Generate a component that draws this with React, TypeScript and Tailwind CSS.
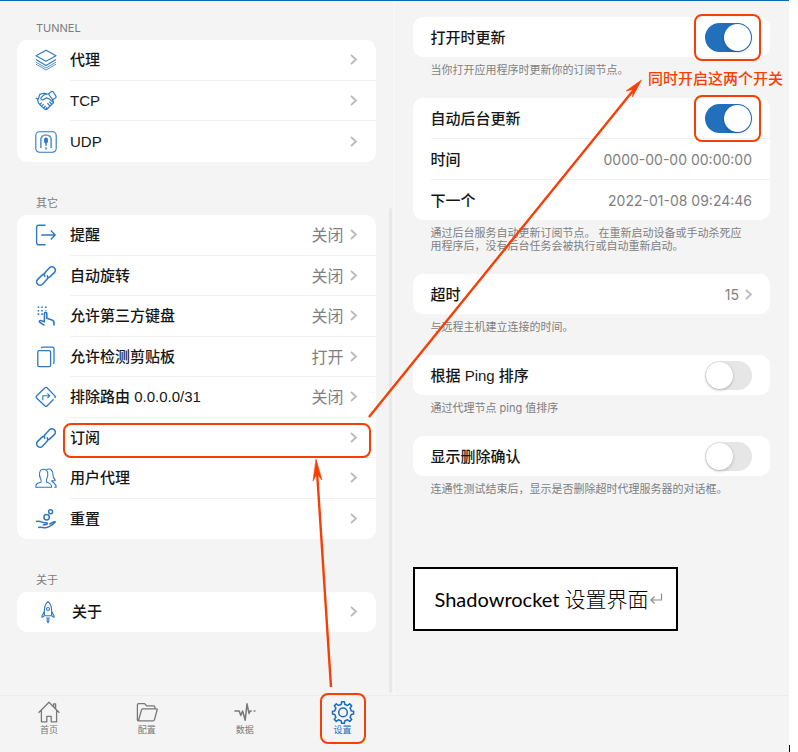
import type { ReactNode } from 'react';

const iconPaths: Record<string, ReactNode> = {
  layers: (
    <>
      <path d="M11 1.3 21 6.8 11 12.3 1 6.8Z" />
      <path d="m1 10.6 10 5.8 10-5.8" />
      <path d="m1 13.2 10 5.8 10-5.8M1 15.2l10 5.8 10-5.8" strokeWidth=".8" />
    </>
  ),
  handshake: (
    <g strokeWidth="1.2">
      <path d="m.8 8 2.400 1.400 1.600-5 4-1.200 3 .8" />
      <path d="m13.400 4 3.200-2.400c.6-.4 1.200-.3 1.600.2l2.800 4.600c.3.6.2 1-.3 1.400l-2.900 2Z" />
      <path d="M13.400 4 9.800 4.200 6 7.600c-.8 2.200 1.400 3 3.600 1.400l2-1.200c2 .4 4.600 2.400 6.200 4.200M17.800 9.800l.6 2.400c0 1.400-1 2.200-2.200 1.600" />
      <path d="M2.400 9.600 3.600 13l2 2.600 4.400 3.600c.8.500 1.500.4 2.200-.2l4.800-5M6.600 12.600l-2 2.200M8.600 14.200l-2 2.200M10.600 15.800l-1.800 2.200M12.400 13.200l2.400 2.600M14.200 11.600l2.400 2.600M12 17.400l-1.200 1.400" />
    </g>
  ),
  magnet: (
    <>
      <rect x=".8" y=".8" width="20.4" height="20.4" rx="3.6" />
      <path d="M5.800 17V9.400C5.800 6 8 4 11 4s5.200 2 5.200 5.400V17" strokeWidth="1.700" strokeOpacity=".75" />
      <rect x="9.700" y="7" width="2.600" height="4.800" rx="1" fill="currentColor" />
      <path d="M11 12v2.800M11 16.200v2.200" strokeWidth="1.400" />
    </>
  ),
  exit: (
    <path d="M10.600 1.200H3.800A2.200 2.200 0 0 0 1.600 3.400v15.200a2.200 2.200 0 0 0 2.200 2.200h6.800M6.200 11h14M15.800 6.600l4.400 4.400-4.400 4.400" strokeWidth="1.400" />
  ),
  link: (
    <g strokeWidth="1.500">
      <path d="M10.200 11.600c-1.400-1.400-1.300-3 0-4.200L14.700 2.600a3 3 0 0 1 4.300 0l.5.500a3 3 0 0 1 0 4.300l-4.600 4.500c-.9.900-2 1.100-3 .7" />
      <path d="M11.800 10.400c1.400 1.400 1.300 3 0 4.200l-4.500 4.800a3 3 0 0 1-4.300 0l-.5-.5a3 3 0 0 1 0-4.300l4.600-4.500c.9-.9 2-1.100 3-.7" />
    </g>
  ),
  touch: (
    <>
      <path d="M3.400 1.500v9M7 1.500v9M10.800 1.500v4" strokeWidth="1.600" strokeDasharray="1.600 1.800" />
      <path d="m9.400 20.400-4.800-3.200c-.8-1.600.8-2 2-1.400l2.800 1V8.600c0-1.600 2.400-1.600 2.400 0v4.600l5.200 1.800c1.600.600 2.200 1.800 2 3.200v2.400" strokeWidth="1.600" />
    </>
  ),
  copy: (
    <>
      <rect x="2.800" y="4.600" width="12.800" height="16" rx="1.400" strokeWidth="1.300" />
      <path d="M6.400 2.200c.2-.700.6-1 1.400-1h9.600c1 0 1.600.600 1.600 1.600v13.400c0 .8-.4 1.200-1 1.400" strokeWidth="1.300" />
    </>
  ),
  route: (
    <>
      <path d="M18.600 13.200 12 20a1.400 1.400 0 0 1-2 0L1.500 12a1.400 1.400 0 0 1 0-2L10 1.800a1.400 1.400 0 0 1 2 0l8.600 8.800-1 1.200" strokeWidth="1.300" />
      <path d="M7.800 14.200v-4.400h6.800M12.400 7.400l2.400 2.400-2.400 2.400" />
    </>
  ),
  users: (
    <>
      <path d="M.8 20.200c0-3.400 1.200-4.200 5.200-5 .6-1.400.2-2.600-.6-4-1.600-3.200-1.400-9 3.200-9s5 5.600 3.400 9c-.8 1.400-1 2.600-.4 4 3.800.8 5 1.800 5 5Z" />
      <path d="M11.400 2.600c5-2 6.800 2 6.600 5.400 0 3.200 1.400 4 2.400 5.200-1.200.600-2.600.8-3.800.6.400 1.600 4.600 2 4.600 6.400h-2" />
    </>
  ),
  care: (
    <g strokeWidth="1.500">
      <circle cx="11.600" cy="9.200" r="2.700" />
      <circle cx="15.600" cy="3.800" r="2" />
      <path d="M1 13.600c4-.8 5 .2 7.200 1 1.600.4 3.600-.4 4.200.6.600 1.200-2.600 1.800-4.600 1.600M3 19.400c4.200-.8 5.200.8 8.600.2 3-.6 6.400-3.200 8.800-5.800-1.400-.8-3.200.8-6.200 2.400" />
    </g>
  ),
  rocket: (
    <>
      <path d="M7.400 14.800V8.400C7.600 5 9.200 2.200 11 .8c1.800 1.400 3.400 4.200 3.600 7.600v6.400ZM7.400 10.200l-2.400 4.600v1.600l2.400-1.600M14.600 10.200l2.400 4.600v1.600l-2.400-1.600M9 17h4" />
      <circle cx="11" cy="8" r="1.500" />
      <path d="M11 17.600c-1.600 1.200-1 3 0 4 1-1 1.600-2.800 0-4Z" />
    </>
  ),
  home: (
    <path d="M.6 11.800 11 1.200l10.400 10.600M3.400 9.400v11.400h5.400v-5.400h4.400v5.400h5.400V9.400M15.600 5.600V2.800h2v5" strokeWidth="1.300" />
  ),
  folder: (
    <path d="M1.400 18.400V4.200c0-1 .5-1.600 1.400-1.600h5.800l2 2.200h6.800c1 0 1.600.600 1.600 1.600v1.400M2.400 19.800 5.600 8.600c.2-.6.600-.8 1.200-.8h13.600c.8 0 1 .4.800 1l-2.800 10c-.2.700-.6 1-1.200 1H2.600c-.8 0-1.200-.4-1.200-1.400" strokeWidth="1.300" />
  ),
  pulse: (
    <path d="M.4 10h4.800l1.600 4.400 1.800-4.400 2.600 9.200L13 2.800l2 9.600 1.200-2.400h1.600M19.600 10h1.800" strokeWidth="1.500" />
  ),
  gear: (
    <g strokeWidth="1.500">
      <path d="M9.300 3.300 9.600.8h2.800l.3 2.500 2.900 1.200 2.100-1.600 2 2-1.600 2.100 1.200 2.900 2.300.3v2.900l-2.300.3-1.200 2.900 1.600 2.100-2 2-2.100-1.600-2.900 1.200-.3 2.300H9.600l-.3-2.300-2.900-1.200-2.100 1.600-2-2 1.600-2.100-1.200-2.900L.5 13.100v-2.900l2.200-.3 1.200-2.900-1.600-2.100 2-2 2.100 1.600Z" />
      <circle cx="11" cy="11.400" r="4.300" />
    </g>
  ),
};

function Icon({ name, className = '' }: { name: string; className?: string }) {
  return (
    <svg
      viewBox="0 0 22 22"
      className={`size-[22px] shrink-0 overflow-visible ${className}`}
      fill="none"
      stroke="currentColor"
      strokeWidth="1.1"
      strokeLinejoin="round"
      aria-hidden="true"
    >
      {iconPaths[name]}
    </svg>
  );
}

function Chevron() {
  return (
    <svg viewBox="0 0 7 11" className="h-[11px] w-[7px] shrink-0" fill="none" stroke="#b9b9b9" strokeWidth="1.7" aria-hidden="true">
      <path d="m1 1 5 4.500-5 4.500" />
    </svg>
  );
}

type Item = { icon: string; label: string; value?: string; marked?: boolean };

const tunnel: Item[] = [
  { icon: 'layers', label: '代理' },
  { icon: 'handshake', label: 'TCP' },
  { icon: 'magnet', label: 'UDP' },
];

const others: Item[] = [
  { icon: 'exit', label: '提醒', value: '关闭' },
  { icon: 'link', label: '自动旋转', value: '关闭' },
  { icon: 'touch', label: '允许第三方键盘', value: '关闭' },
  { icon: 'copy', label: '允许检测剪贴板', value: '打开' },
  { icon: 'route', label: '排除路由 0.0.0.0/31', value: '关闭' },
  { icon: 'link', label: '订阅', marked: true },
  { icon: 'users', label: '用户代理' },
  { icon: 'care', label: '重置' },
];

const labelClass = "pt-px font-['Liberation_Sans','Noto_Sans_CJK_SC',sans-serif] font-medium";

function MenuSection({ title, items, height, indent = 'pl-[18px]' }: { title: string; items: Item[]; height: string; indent?: string }) {
  return (
    <section>
      <h2 className="mb-1 pl-[19px] text-[11px] leading-4 text-[#7c7c7c]">{title}</h2>
      <div className={`flex flex-col rounded-[10px] bg-white ${height}`}>
        {items.map((item) => (
          <button key={item.label} type="button" className={`group flex min-h-10 flex-1 items-center gap-[13px] text-left ${indent}`}>
            <Icon name={item.icon} className="text-[#2f78c2]" />
            <span className="relative flex flex-1 items-center gap-[6px] self-stretch border-b border-[#f1f1f1] pr-[19px] group-last:border-transparent">
              <span className={`flex-1 ${labelClass}`}>{item.label}</span>
              {item.value && <span className="pt-px text-[16px] text-[#808080]">{item.value}</span>}
              <Chevron />
              {item.marked && <span className="absolute -left-[7px] right-[5px] top-[5px] -bottom-px rounded-lg border-2 border-[#f63f04]" />}
            </span>
          </button>
        ))}
      </div>
    </section>
  );
}

function Switch({ id, on = false, marked = false }: { id: string; on?: boolean; marked?: boolean }) {
  return (
    <span className="relative flex">
      <input
        id={id}
        type="checkbox"
        role="switch"
        defaultChecked={on}
        className="h-[29px] w-[47px] appearance-none rounded-full bg-[#e6e6e6] p-px before:block before:size-[27px] before:rounded-full before:bg-white before:shadow-[0_1px_3px_rgba(0,0,0,0.25)] checked:bg-[#2270bb] checked:before:ml-[18px]"
      />
      {marked && <span className="pointer-events-none absolute -inset-y-[9px] -right-[9px] -left-[11px] rounded-lg border-2 border-[#f63f04]" />}
    </span>
  );
}

function Panel({ children, note }: { children: ReactNode; note: string }) {
  return (
    <section>
      <div className="flex flex-col rounded-[10px] bg-white pl-[18px]">{children}</div>
      <p className="mt-[7px] px-[18px] text-[11px] leading-[13px] text-[#808080]">{note}</p>
    </section>
  );
}

const rowClass = 'flex h-10 w-full items-center justify-between pr-[18px] text-left';
const dividedRowClass = 'flex h-[41px] w-full items-center justify-between border-b border-[#f1f1f1] pr-[18px] text-left';
const valueClass = 'pt-px text-[14px] text-[#808080]';

const tabs = [
  { icon: 'home', label: '首页' },
  { icon: 'folder', label: '配置' },
  { icon: 'pulse', label: '数据' },
  { icon: 'gear', label: '设置', active: true },
];

export default function App() {
  return (
    <div className="flex min-h-screen bg-white font-['Inter','Noto_Sans_CJK_SC',sans-serif] text-[15px] leading-5 text-[#161616]">
      <div className="relative flex flex-1 flex-col border-t border-[#0b68b5] bg-[#f4f4f4]">
        <main className="grid flex-1 grid-cols-2">
          <div className="relative flex flex-col gap-[33px] border-r-2 border-[#f7f7f7] pt-[19px] pr-[17px] pl-[17px]">
            <MenuSection title="TUNNEL" items={tunnel} height="min-h-[122px]" />
            <MenuSection title="其它" items={others} height="min-h-[324px]" />
            <MenuSection title="关于" items={[{ icon: 'rocket', label: '关于' }]} height="min-h-10" indent="pl-5" />
            <div className="absolute top-[207px] right-px bottom-[2px] w-[3px] rounded-full bg-[#e8e8e8]" />
          </div>

          <div className="flex flex-col gap-[21px] pt-4 pr-[19px] pl-[18px]">
            <Panel note="当你打开应用程序时更新你的订阅节点。">
              <div className={rowClass}>
                <label htmlFor="launch" className={labelClass}>打开时更新</label>
                <Switch id="launch" on marked />
              </div>
            </Panel>
            <Panel note="通过后台服务自动更新订阅节点。 在重新启动设备或手动杀死应用程序后，没有后台任务会被执行或自动重新启动。">
              <div className={dividedRowClass}>
                <label htmlFor="background" className={labelClass}>自动后台更新</label>
                <Switch id="background" on marked />
              </div>
              <div className={dividedRowClass}>
                <span className={labelClass}>时间</span>
                <span className={valueClass}>0000-00-00 00:00:00</span>
              </div>
              <div className={rowClass}>
                <span className={labelClass}>下一个</span>
                <span className={valueClass}>2022-01-08 09:24:46</span>
              </div>
            </Panel>
            <Panel note="与远程主机建立连接的时间。">
              <button type="button" className={rowClass}>
                <span className={labelClass}>超时</span>
                <span className="flex items-center gap-[6px]">
                  <span className={valueClass}>15</span>
                  <Chevron />
                </span>
              </button>
            </Panel>
            <Panel note="通过代理节点 ping 值排序">
              <div className={rowClass}>
                <label htmlFor="ping" className={labelClass}>根据 Ping 排序</label>
                <Switch id="ping" />
              </div>
            </Panel>
            <Panel note="连通性测试结束后，显示是否删除超时代理服务器的对话框。">
              <div className={rowClass}>
                <label htmlFor="confirm" className={labelClass}>显示删除确认</label>
                <Switch id="confirm" />
              </div>
            </Panel>
            <p className="mt-[50px] flex items-center self-start border-2 border-black bg-white py-4 pr-[13px] pl-5 font-['Lato','Noto_Sans_CJK_SC',sans-serif] text-[20px] leading-7 whitespace-pre text-black">
              Shadowrocket <span className="text-[21px] font-light">设置界面</span>
              <svg viewBox="0 0 14 14" className="size-[14px]" fill="none" stroke="#8d8d8d" strokeWidth="1.200" aria-hidden="true">
                <path d="M12.500 1.500v6.500H2M5.500 4.500 2 8l3.500 3.500" />
              </svg>
            </p>
          </div>
        </main>

        <footer className="grid h-[57px] grid-cols-2 border-t border-[#ededed]">
          <nav className="grid grid-cols-4 pr-[3px]">
            {tabs.map((tab) => (
              <a
                key={tab.label}
                href="#"
                className={`relative flex flex-col items-center gap-px pt-[5px] text-[9px] leading-3 ${tab.active ? 'text-[#1c6dbd]' : 'text-[#787878]'}`}
              >
                <Icon name={tab.icon} />
                {tab.label}
                {tab.active && <span className="absolute inset-x-[26px] -top-[3px] bottom-[8px] rounded-lg border-2 border-[#f63f04]" />}
              </a>
            ))}
          </nav>
        </footer>

        <div className="pointer-events-none absolute inset-0">
          <svg viewBox="0 0 789 751" className="h-[751px] w-[789px]" fill="none" stroke="#f63f04" strokeWidth="2.400" aria-hidden="true">
            <path d="M369 416 636 86M331 686 317 470" />
            <path d="M641.500 79 626 90l7-1.500-.5 7.500ZM316 458l-3 22 4-7 5 6Z" fill="#f63f04" strokeWidth=".6" />
          </svg>
          <strong className="absolute top-[68px] left-[648px] font-medium text-[#f63f04]">同时开启这两个开关</strong>
        </div>
      </div>
      <div className="flex w-[9px] items-end">
        <span className="h-[7px] w-px bg-black" />
      </div>
    </div>
  );
}
